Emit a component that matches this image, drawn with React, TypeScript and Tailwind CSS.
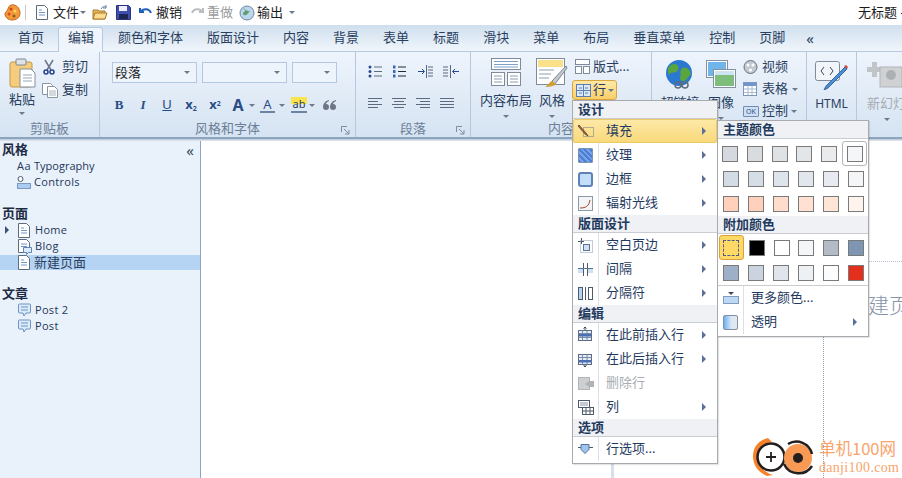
import type { ReactNode } from 'react';

const tabs = ['首页', '编辑', '颜色和字体', '版面设计', '内容', '背景', '表单', '标题', '滑块', '菜单', '布局', '垂直菜单', '控制', '页脚'];

const themeColors = [
  ['#d5d8de', '#d8dcdf', '#dfe2e4', '#e3e6e8', '#e9ebed', '#f5f6f8'],
  ['#d3dbe4', '#d5dee6', '#dde4ec', '#e2e7ee', '#e7ebf1', '#f5f6f8'],
  ['#ffd0bb', '#ffd0bb', '#ffdccb', '#ffe0d3', '#ffe4d8', '#fff4ed'],
];
const extraColors = [
  ['#ffd966', '#000000', '#ffffff', '#f5f6f8', '#b3bbc6', '#7f96b2'],
  ['#9db0c8', '#cbd3df', '#e0e4eb', '#eef1f4', '#fbfcfd', '#e3301c'],
];

const Caret = ({ className = '' }: { className?: string }) => (
  <span className={`inline-block w-0 h-0 border-x-[3px] border-x-transparent border-t-[3px] border-t-[#6d7a8c] ${className}`} />
);

const Arrow = () => <span className="ml-auto w-0 h-0 border-y-[4px] border-y-transparent border-l-[4px] border-l-[#5a6f9c]" />;

const Icon = ({ w = 16, h = 16, box, children }: { w?: number; h?: number; box?: string; children: ReactNode }) => (
  <svg width={w} height={h} viewBox={box ?? `0 0 ${w} ${h}`} className="shrink-0">{children}</svg>
);

const DocIcon = ({ w = 12, h = 15 }: { w?: number; h?: number }) => (
  <Icon w={w} h={h} box="0 0 12 15">
    <path d="M.5.5h8l3 3v11H.5z" fill="#fff" stroke="#5f6c7c" />
    <path d="M3 5h3M3 7.5h6M3 10h6" stroke="#6f97c8" />
  </Icon>
);

const BlogIcon = () => (
  <Icon w={14} h={16}>
    <path d="M.5.5h8l3 3v10H.5z" fill="#fff" stroke="#5f6c7c" />
    <path d="M3 5h6M3 7.5h6" stroke="#6f97c8" />
    <path d="M5.500 8.500h8v5h-3l-2 2v-2h-3z" fill="#dcebfa" stroke="#5f86b8" />
  </Icon>
);

const Bubble = () => (
  <Icon w={13} h={14}>
    <path d="M1.5 1h10a1 1 0 0 1 1 1v7a1 1 0 0 1-1 1H8l-2 3-1-3H1.5a1 1 0 0 1-1-1V2a1 1 0 0 1 1-1z" fill="#dcebfa" stroke="#6c93c3" />
    <path d="M3 4h7M3 7h7" stroke="#6c93c3" />
  </Icon>
);

const Lines = ({ kind }: { kind: 'l' | 'c' | 'r' | 'j' }) => {
  const short = kind === 'j' ? [0, 14] : kind === 'l' ? [0, 10] : kind === 'c' ? [2, 12] : [4, 14];
  return (
    <Icon w={14} h={12}>
      {[1, 4, 7, 10].map((y, i) => (
        <path key={y} d={i % 2 ? `M${short[0]} ${y + 0.5}H${short[1]}` : `M0 ${y + 0.5}H14`} stroke="#5a6b80" />
      ))}
    </Icon>
  );
};

const Ball = () => (
  <Icon w={16} h={16}>
    <circle cx="8" cy="8" r="7" fill="#bcd6ee" stroke="#6b8aa8" />
    <path d="M4 4c3-1 3 2 1 3s-1 4 2 3 2-4 5-3" fill="#5f9e6b" />
  </Icon>
);

const Group = ({ w, label, launcher, children }: { w: number; label?: string; launcher?: boolean; children: ReactNode }) => (
  <div style={{ width: w }} className="relative shrink-0 h-full flex flex-col border-r border-[#b6c8de]">
    <div className="flex-1 min-h-0">{children}</div>
    <div className="h-[16px] flex items-center justify-center text-[13px] text-[#6c7f97]">{label}</div>
    {launcher && (
      <svg width="9" height="9" className="absolute right-[5px] bottom-[2px]">
        <path d="M.5 6V.5H6M3 3l5 5M8 4v4H4" fill="none" stroke="#7d8da1" />
      </svg>
    )}
  </div>
);

const Combo = ({ w, text }: { w: number; text?: string }) => (
  <div style={{ width: w }} className="h-[21px] bg-[#eef4fb] border border-[#b4c7e1] flex items-center px-[2px] text-[13px] text-[#1b1b1b]">
    {text}
    <Caret className="ml-auto mr-[4px] border-t-[#5c6470]" />
  </div>
);

const Fmt = ({ w, className = '', children }: { w: number; className?: string; children: ReactNode }) => (
  <span style={{ width: w }} className={`shrink-0 text-center text-[13px] text-[#2a4d87] ${className}`}>{children}</span>
);

const Swatch = ({ color, ring, sel }: { color: string; ring?: boolean; sel?: boolean }) => (
  <div className={`w-[25px] h-[25px] flex items-center justify-center ${ring ? 'rounded-[3px] border border-[#b1b4b8] h-[23px] w-[23px] mx-[1px]' : ''} ${sel ? 'rounded-[3px] border border-[#d8a13a] bg-[#ffd966] w-[23px] h-[23px] mx-[1px]' : ''}`}>
    <div
      style={{ backgroundColor: color }}
      className={`w-[16px] h-[16px] ${sel ? 'border border-dashed border-[#4b5f86]' : 'border border-[#7a7a7a]'}`}
    />
  </div>
);

const MenuHead = ({ children }: { children: ReactNode }) => (
  <div className="h-[18px] bg-[#eff1f5] border-b border-[#c9ccd1] pl-[5px] text-[13px] leading-[17px] font-bold text-[#1f3a5f]">{children}</div>
);

const MenuRow = ({ icon, text, arrow, active, disabled }: { icon: ReactNode; text: string; arrow?: boolean; active?: boolean; disabled?: boolean }) => (
  <div className={`relative h-[24px] flex items-center pr-[11px] text-[13px] ${disabled ? 'text-[#a9adb3]' : 'text-[#1f3a5f]'} ${active ? 'bg-gradient-to-b from-[#fde9a8] to-[#f9d879] outline outline-1 -outline-offset-1 outline-[#eecb62] rounded-[2px]' : ''}`}>
    <span className="w-[25px] h-full flex items-center justify-center shrink-0">{icon}</span>
    <span className="ml-[8px]">{text}</span>
    {arrow && <Arrow />}
    {!active && <span className="absolute left-[25px] top-0 bottom-0 w-px bg-[#dcdfe3]" />}
  </div>
);

const TableIcon = ({ fill = '#4a6fb5', mark }: { fill?: string; mark?: 'up' | 'down' }) => (
  <Icon w={15} h={16}>
    <rect x=".5" y="3.5" width="13" height="10" fill="#e7edf7" stroke="#5a6b88" />
    <path d="M.5 6.5h13M.5 10.5h13M4.5 3.5v10M9 3.5v10" stroke="#7a8aa6" />
    <rect x="1" y={mark === 'down' ? 9 : 7} width="12" height="2.5" fill={fill} />
    {mark === 'up' && <path d="M7 0v3M5.5 1.5L7 0l1.5 1.5" stroke="#3b4a60" fill="none" />}
    {mark === 'down' && <path d="M7 13.5V16M5.5 14.5L7 16l1.5-1.5" stroke="#3b4a60" fill="none" />}
  </Icon>
);

function App() {
  return (
    <div className="relative w-[902px] h-[478px] overflow-hidden bg-white font-['Noto_Sans','Noto_Sans_CJK_SC',sans-serif] flex flex-col">
      {/* quick access bar */}
      <div className="h-[25px] shrink-0 flex items-center text-[13px] text-[#1b1b1b]">
        <svg width="17" height="17" viewBox="0 0 17 17" className="ml-[4px]">
          <path d="M7 1c5-1 9 3 9 8s-4 7-8 7-7-3-7-6c0-2 1-2 2-3s1-5 4-6z" fill="#f19a3a" stroke="#c9671e" />
          <circle cx="7" cy="5" r="1.5" fill="#d83a22" />
          <circle cx="11" cy="7" r="1.5" fill="#ffd75a" />
          <circle cx="5" cy="10" r="1.5" fill="#e0452c" />
          <circle cx="10" cy="12" r="1.5" fill="#8f5a22" />
        </svg>
        <span className="ml-[4px] w-px h-[15px] bg-[#c7c7c7]" />
        <span className="ml-[10px]"><DocIcon /></span>
        <span className="ml-[5px]">文件</span>
        <Caret className="ml-[1px]" />
        <svg width="16" height="15" className="ml-[6px]">
          <path d="M1 5h5l1 1h6v8H1z" fill="#e9b75c" stroke="#a97a2c" />
          <path d="M1 14l2-6h12l-2 6z" fill="#fbdc91" stroke="#a97a2c" />
          <path d="M9 4c1-2 3-3 5-2M14 0v3h-3" fill="none" stroke="#5f7fa3" />
        </svg>
        <svg width="15" height="15" className="ml-[8px]">
          <path d="M.5.5h12l2 2v12H.5z" fill="#3f4fb0" stroke="#2a347a" />
          <rect x="3" y="1" width="8" height="5" fill="#eef" />
          <rect x="3" y="9" width="9" height="5" fill="#1e2554" />
        </svg>
        <svg width="13" height="11" className="ml-[8px]">
          <path d="M1 1v4h4M1.5 5C4 1.500 10 1 12 6" fill="none" stroke="#1d5fb5" strokeWidth="2" />
        </svg>
        <span className="ml-[4px]">撤销</span>
        <svg width="13" height="11" className="ml-[9px]">
          <path d="M12 1v4H8M11.500 5C9 1.500 3 1 1 6" fill="none" stroke="#b9bcc0" strokeWidth="2" />
        </svg>
        <span className="ml-[3px] text-[#9a9c9e]">重做</span>
        <span className="ml-[6px]"><Ball /></span>
        <span className="ml-[2px]">输出</span>
        <Caret className="ml-[6px]" />
        <span className="ml-auto w-[44px] whitespace-nowrap overflow-hidden">无标题 -</span>
      </div>

      {/* tabs */}
      <div className="h-[27px] shrink-0 bg-gradient-to-b from-[#cfdfee] to-[#f0f5fb] flex items-end pl-[18px] gap-[24px] border-b border-[#b7c9e2] text-[13px] text-[#2a3f5f]">
        {tabs.map((t) => (
          <div key={t} className={`relative h-[26px] flex items-center whitespace-nowrap ${t === '编辑' ? 'z-10' : ''}`}>
            {t === '编辑' && <span className="absolute -left-[10px] -right-[9px] top-[2px] -bottom-px bg-[#f0f5fc] border border-b-0 border-[#b7c9e2] rounded-t-[3px]" />}
            <span className="relative">{t}</span>
          </div>
        ))}
        <span className="h-[26px] flex items-center text-[15px] text-[#2a3f5f] -ml-[3px]">«</span>
      </div>

      {/* ribbon */}
      <div className="h-[87px] shrink-0 bg-gradient-to-b from-[#eef4fc] to-[#d5e3f2] border-b-2 border-[#8ea5c0] flex">
        <Group w={100} label="剪贴板">
          <div className="flex pl-[6px] pt-[6px]">
            <div className="w-[32px] flex flex-col items-center">
              <svg width="27" height="30">
                <rect x="1" y="4" width="22" height="25" rx="2" fill="#f6cc7d" stroke="#c4974d" />
                <rect x="7" y="1" width="10" height="6" rx="1" fill="#dfe3e8" stroke="#7d8794" />
                <path d="M11 11h11l4 4v14H11z" fill="#fff" stroke="#8390a0" />
                <path d="M14 17h9M14 20h9M14 23h9" stroke="#9ba7b6" />
              </svg>
              <span className="text-[13px] text-[#2a3f5f] mt-[2px]">粘贴</span>
              <Caret className="mt-[2px]" />
            </div>
            <div className="ml-[5px] flex flex-col gap-[4px] text-[13px] text-[#2a3f5f]">
              <div className="flex items-center gap-[6px] h-[18px]">
                <svg width="12" height="16">
                  <path d="M2 1l6 10M10 1L4 11" stroke="#6b7686" strokeWidth="1.500" />
                  <circle cx="3" cy="13" r="2" fill="none" stroke="#24408e" strokeWidth="1.500" />
                  <circle cx="9" cy="13" r="2" fill="none" stroke="#24408e" strokeWidth="1.500" />
                </svg>
                <span className="ml-[1px]">剪切</span>
              </div>
              <div className="flex items-center gap-[4px] h-[18px] -ml-[1px] mt-[1px]">
                <svg width="16" height="15">
                  <path d="M.5.5h8l2 2v9H.5z" fill="#fff" stroke="#8a95a3" />
                  <path d="M5.500 3.500h7l3 3v8h-10z" fill="#fff" stroke="#8a95a3" />
                  <path d="M7 8h7M7 10h7M7 12h7" stroke="#a8b2bf" />
                </svg>
                <span>复制</span>
              </div>
            </div>
          </div>
        </Group>

        <Group w={256} label="风格和字体" launcher>
          <div className="pl-[12px] pt-[10px]">
            <div className="flex gap-[5px]">
              <Combo w={85} text="段落" />
              <Combo w={85} />
              <Combo w={45} />
            </div>
            <div className="flex items-center mt-[10px] -ml-[5px]">
              <Fmt w={24} className="font-bold font-['Liberation_Serif',serif]">B</Fmt>
              <Fmt w={24} className="italic font-bold font-['Liberation_Serif',serif]">I</Fmt>
              <Fmt w={24} className="underline font-['Liberation_Sans',sans-serif]">U</Fmt>
              <Fmt w={24} className="font-bold">x<sub className="text-[7px]">2</sub></Fmt>
              <Fmt w={24} className="font-bold">x<sup className="text-[7px]">2</sup></Fmt>
              <Fmt w={22} className="font-bold text-[16px]">A</Fmt>
              <Caret className="mr-[5px]" />
              <span className="w-[15px] text-center text-[13px] text-[#2a4d87] border-b-2 border-[#6d83a3] leading-[14px]">A</span>
              <Caret className="ml-[4px] mr-[6px]" />
              <span className="w-[16px] text-[11px] leading-[14px] text-[#2a3f5f] border-b-2 border-[#6d83a3] bg-[linear-gradient(#f9e44c_50%,transparent_50%)] text-center">ab</span>
              <Caret className="ml-[2px] mr-[8px]" />
              <svg width="14" height="11" className="shrink-0">
                <path d="M6 0C2 1 0 4 0 7a3 3 0 1 0 3-3c0-1 1-2 3-3zM13 0C9 1 7 4 7 7a3 3 0 1 0 3-3c0-1 1-2 3-3z" fill="#6c7684" />
              </svg>
            </div>
          </div>
        </Group>

        <Group w={115} label="段落" launcher>
          <div className="pl-[12px] pt-[13px] flex flex-col gap-[19px]">
            <div className="flex items-center gap-[10px]">
              <Icon w={14} h={13}>
                {[2, 6.500, 11].map((y) => (
                  <g key={y}><circle cx="2" cy={y} r="1.500" fill="#27478f" /><path d={`M6 ${y}h8`} stroke="#5a6b80" /></g>
                ))}
              </Icon>
              <Icon w={14} h={13}>
                {[2, 6.500, 11].map((y) => (
                  <g key={y}><rect x="1" y={y - 1.500} width="2.500" height="3" fill="#3c66b4" /><path d={`M6 ${y}h8`} stroke="#1f2a3a" /></g>
                ))}
              </Icon>
              <span className="ml-[2px]">
                <Icon w={15} h={13}>
                  <path d="M0 6.500h6M4 4l2.500 2.500L4 9" stroke="#27478f" fill="none" />
                  <path d="M8.500 0v13M10 2h5M10 5h5M10 8h5M10 11h5" stroke="#5a6b80" />
                </Icon>
              </span>
              <Icon w={16} h={13}>
                <path d="M0 2h5M0 5h5M0 8h5M0 11h5M7.500 0v13" stroke="#5a6b80" />
                <path d="M10 6.500h6M12 4L9.500 6.500 12 9" stroke="#27478f" fill="none" />
              </Icon>
            </div>
            <div className="flex items-center gap-[10px]">
              <Lines kind="l" />
              <Lines kind="c" />
              <Lines kind="r" />
              <Lines kind="j" />
            </div>
          </div>
        </Group>

        <Group w={181} label="内容">
          <div className="flex pl-[9px] pt-[6px] text-[13px] text-[#2a3f5f]">
            <div className="w-[52px] flex flex-col items-center">
              <svg width="30" height="28">
                <rect x=".5" y=".5" width="29" height="11" fill="#fff" stroke="#7f8b9a" />
                <path d="M3 3.500h24M3 6.500h24M3 9h24" stroke="#7e9fc8" />
                <rect x=".5" y="14.500" width="13" height="13" fill="#fff" stroke="#7f8b9a" />
                <rect x="16.500" y="14.500" width="13" height="13" fill="#fff" stroke="#7f8b9a" />
                <path d="M3 18h8M3 21h8M3 24h8M19 18h8M19 21h8M19 24h8" stroke="#8c9cb0" />
              </svg>
              <span className="mt-[5px] whitespace-nowrap">内容布局</span>
              <Caret className="mt-[4px]" />
            </div>
            <div className="ml-[2px] w-[36px] flex flex-col items-center">
              <svg width="32" height="30" className="-mb-[2px]">
                <rect x=".5" y=".5" width="28" height="26" fill="#fff" stroke="#7f8b9a" />
                <rect x="2" y="2" width="25" height="7" fill="#fbe08a" />
                <path d="M3 12h15M3 16h12M3 20h10" stroke="#8c9cb0" />
                <path d="M30 8L16 23l3 3L31 10z" fill="#c4c9cf" stroke="#7d8794" />
                <path d="M16 23c-3 1-3 4-7 6 5 0 10-1 11-3z" fill="#d2a033" />
              </svg>
              <span className="mt-[5px]">风格</span>
              <Caret className="mt-[4px]" />
            </div>
            <div className="ml-[5px] flex flex-col">
              <div className="flex items-center gap-[3px] h-[17px]">
                <svg width="15" height="15">
                  <rect x=".5" y=".5" width="14" height="5" fill="#fff" stroke="#7f8b9a" />
                  <rect x=".5" y="7.500" width="6" height="7" fill="#fff" stroke="#7f8b9a" />
                  <rect x="8.500" y="7.500" width="6" height="7" fill="#fff" stroke="#7f8b9a" />
                </svg>
                <span className="whitespace-nowrap">版式...</span>
              </div>
            </div>
          </div>
          <div className="absolute left-[101px] top-[28px] w-[45px] h-[20px] rounded-[3px] border border-[#d9a63e] bg-gradient-to-b from-[#fde9a8] to-[#f8cf67] flex items-center pl-[3px] gap-[2px] text-[13px] text-[#1f3a5f]">
            <svg width="15" height="13">
              <rect x=".5" y=".5" width="14" height="12" fill="#dbe8f7" stroke="#5d7fae" />
              <path d="M7.500 1v11M1 6.500h13M3 4h3M9 4h3M3 9h3M9 9h3" stroke="#5d7fae" />
            </svg>
            <span>行</span>
            <Caret />
          </div>
        </Group>

        <Group w={155}>
          <div className="flex pl-[13px] pt-[8px] text-[13px] text-[#2a3f5f]">
            <div className="w-[30px] flex flex-col items-center">
              <svg width="30" height="31">
                <circle cx="14" cy="13" r="13" fill="#2a78cf" />
                <path d="M6 5c5-3 9 1 7 5s-7 1-9 5c-2-4-1-8 2-10zM17 8c5-2 8 2 9 6-3 3-5 8-9 7s0-8-2-9z" fill="#5aa53e" />
                <path d="M10 25a3 3 0 0 1 6 0 3 3 0 0 1-6 0zM17 25a3 3 0 0 1 6 0 3 3 0 0 1-6 0z" fill="none" stroke="#5f6c7c" strokeWidth="1.500" />
              </svg>
              <span className="mt-[2px] whitespace-nowrap">超链接</span>
            </div>
            <div className="ml-[11px] w-[30px] flex flex-col items-center">
              <svg width="30" height="28">
                <rect x=".5" y=".5" width="21" height="17" fill="#fff" stroke="#8390a0" />
                <rect x="2" y="2" width="18" height="14" fill="#6fb5ea" />
                <rect x="7.500" y="9.500" width="22" height="18" fill="#fff" stroke="#8390a0" />
                <rect x="9" y="11" width="19" height="15" fill="#7fbd7a" />
                <path d="M9 15h19V11H9z" fill="#cfe4f2" />
              </svg>
              <span className="mt-[5px]">图像</span>
              <Caret className="mt-[4px]" />
            </div>
            <div className="ml-[7px] -mt-[2px] flex flex-col gap-[4px]">
              <div className="flex items-center gap-[4px] h-[18px]">
                <svg width="15" height="15">
                  <circle cx="7.500" cy="7" r="6.500" fill="#c2c9d2" stroke="#69737f" />
                  <circle cx="5" cy="5" r="1.500" fill="#fff" />
                  <circle cx="10" cy="5" r="1.500" fill="#fff" />
                  <circle cx="7.500" cy="10" r="1.500" fill="#fff" />
                </svg>
                <span>视频</span>
              </div>
              <div className="flex items-center gap-[4px] h-[18px]">
                <svg width="15" height="14">
                  <rect x=".5" y=".5" width="13" height="13" fill="#fff" stroke="#7f97b8" />
                  <rect x="1" y="1" width="12" height="3" fill="#6f95cc" />
                  <path d="M1 7h12M1 10.500h12M5 4v9M9 4v9" stroke="#a9bbd3" />
                </svg>
                <span>表格</span>
                <Caret />
              </div>
              <div className="flex items-center gap-[3px] h-[18px]">
                <span className="w-[16px] h-[11px] rounded-[1px] bg-[#cfe0f3] border border-[#6f8db5] text-[7px] leading-[9px] text-center text-[#2a4d87]">OK</span>
                <span>控制</span>
                <Caret />
              </div>
            </div>
          </div>
        </Group>

        <Group w={50}>
          <div className="flex flex-col items-center pt-[9px] text-[12px] text-[#2a3f5f]">
            <svg width="33" height="29">
              <rect x=".5" y=".5" width="24" height="19" rx="2" fill="#f2f5f9" stroke="#7f8b9a" />
              <path d="M9 6l-3 4 3 4M15 6l3 4-3 4" fill="none" stroke="#3b4a60" />
              <path d="M30 6L11 25l-2 4 4-2L32 8z" fill="#4f8fd8" stroke="#33659f" />
              <path d="M29 5l3 3 1-2-2-2z" fill="#d9483a" />
            </svg>
            <span className="mt-[5px]">HTML</span>
          </div>
        </Group>

        <div className="flex-1 min-w-0 overflow-hidden">
          <div className="flex flex-col items-start pl-[10px] pt-[8px] text-[13px] text-[#a6abb2] whitespace-nowrap">
            <svg width="35" height="30" className="-mb-[1px]">
              <path d="M5 2h5v5h5v5h-5v5H5v-5H0V7h5z" fill="#c2c5c8" />
              <rect x="13" y="7" width="22" height="20" fill="#cfd1d3" stroke="#b2b5b8" />
              <circle cx="24" cy="15" r="5" fill="#adb0b3" />
            </svg>
            <span className="mt-[5px]">新幻灯片</span>
            <Caret className="mt-[4px] ml-[17px]" />
          </div>
        </div>
      </div>
      <div className="h-[2px] shrink-0 bg-gradient-to-b from-[#b9c7d8] to-[#e4e9f0]" />

      {/* body */}
      <div className="flex-1 min-h-0 flex">
        <div className="relative w-[201px] shrink-0 bg-[#e9f1fb] border-r border-[#8ba4c6] text-[12px] text-[#22385a]">
          <span className="absolute right-[6px] top-0 text-[15px] leading-[18px] text-[#3b4a60]">«</span>
          <div className="h-[17px] pl-[2px] text-[13px] leading-[17px] font-bold text-[#1d2c44]">风格</div>
          <div className="h-[16px] flex items-center pl-[17px] gap-[1px] font-['Open_Sans',sans-serif] text-[11px]">
            <span className="w-[16px] tracking-[0.5px]">Aa</span>
            <span>Typography</span>
          </div>
          <div className="h-[16px] flex items-center pl-[17px] gap-[2px] font-['Open_Sans',sans-serif] text-[11px] tracking-[0.3px]">
            <svg width="15" height="13">
              <circle cx="3.500" cy="3" r="2.500" fill="#fff" stroke="#4d5a6c" />
              <rect x=".5" y="7.500" width="13" height="5" fill="#a9cdf0" stroke="#7d99bb" />
            </svg>
            <span>Controls</span>
          </div>
          <div className="h-[17px] mt-[15px] pl-[2px] text-[13px] leading-[17px] font-bold text-[#1d2c44]">页面</div>
          <div className="relative h-[16px] flex items-center pl-[18px] gap-[5px] font-['Open_Sans',sans-serif] text-[11px] tracking-[0.3px]">
            <span className="absolute left-[5px] w-0 h-0 border-y-[4px] border-y-transparent border-l-[4px] border-l-[#3b5272]" />
            <DocIcon />
            <span>Home</span>
          </div>
          <div className="h-[17px] flex items-center pl-[18px] gap-[3px] font-['Open_Sans',sans-serif] text-[11px] tracking-[0.3px]">
            <BlogIcon />
            <span>Blog</span>
          </div>
          <div className="h-[15px] flex items-center pl-[18px] gap-[4px] bg-[#b5d3f3] text-[13px] text-[#2a3f5f]">
            <DocIcon />
            <span>新建页面</span>
          </div>
          <div className="h-[17px] mt-[15px] pl-[2px] text-[13px] leading-[17px] font-bold text-[#1d2c44]">文章</div>
          <div className="h-[16px] flex items-center pl-[18px] gap-[4px] font-['Open_Sans',sans-serif] text-[11px] tracking-[0.3px]">
            <Bubble />
            <span>Post 2</span>
          </div>
          <div className="h-[16px] flex items-center pl-[18px] gap-[4px] font-['Open_Sans',sans-serif] text-[11px] tracking-[0.3px]">
            <Bubble />
            <span>Post</span>
          </div>
        </div>
        <div className="flex-1 bg-white" />
      </div>

      {/* page canvas behind the menus */}
      <div className="absolute left-[611px] top-[460px] w-[3px] h-[18px] bg-[#d4e0ec]" />
      <div className="absolute left-[823px] top-[262px] bottom-0 border-l border-dotted border-[#8d9db4]" />
      <div className="absolute left-[823px] right-0 top-[261px] border-t border-dotted border-[#b5c1d2]" />
      <div className="absolute left-[868px] top-[291px] text-[21px] leading-[28px] text-[#8493a8] whitespace-nowrap font-light">建页</div>

      {/* watermark */}
      <svg width="64" height="42" viewBox="0 0 64 42" className="absolute left-[752px] top-[436px]">
        <path d="M16 2C7 4 1 11 1 20s5 16 14 20l6-1c-8-2-15-9-15-18S12 8 20 6z" fill="#f7822b" />
        <circle cx="19" cy="21" r="13.500" fill="#fff" stroke="#231f1f" strokeWidth="2.500" />
        <path d="M14 21h10M19 16v10" stroke="#231f1f" strokeWidth="1.800" />
        <circle cx="46" cy="22" r="14" fill="#f89a54" />
        <path d="M36 8a16 16 0 0 1 24 10M32 28a16 16 0 0 0 28 2" fill="none" stroke="#231f1f" strokeWidth="2.500" />
        <circle cx="46" cy="22" r="5" fill="#231f1f" />
      </svg>
      <div className="absolute left-[819px] top-[438px] text-[16.5px] leading-[21px] text-[#f9a46c] whitespace-nowrap font-['Noto_Sans_CJK_SC',sans-serif]">单机100网</div>
      <div className="absolute left-[819px] top-[460px] text-[14px] leading-[15px] text-[#f9a46c] whitespace-nowrap tracking-[0.3px] font-['Liberation_Serif',serif]">danji100.com</div>

      {/* row dropdown */}
      <div className="absolute left-[572px] top-[100px] w-[146px] h-[364px] bg-white border border-[#a7abb0] shadow-[1px_1px_1px_rgba(0,0,0,0.1)]">
        <MenuHead>设计</MenuHead>
        <MenuRow
          active
          arrow
          text="填充"
          icon={
            <svg width="16" height="14">
              <rect x="5.500" y="3.500" width="10" height="9" fill="none" stroke="#6b7686" strokeDasharray="1 1" />
              <path d="M1 1l7 8 2 3-3-2-7-8z" fill="#d8643a" stroke="#2e2e2e" strokeWidth=".7" />
            </svg>
          }
        />
        <MenuRow
          arrow
          text="纹理"
          icon={<span className="w-[15px] h-[15px] bg-[repeating-linear-gradient(45deg,#4d7fd8_0_2px,#7aa3e6_2px_4px)] border border-[#7b93b3] rounded-[1px]" />}
        />
        <MenuRow
          arrow
          text="边框"
          icon={<span className="w-[15px] h-[15px] rounded-[3px] bg-[#c3def8] border-2 border-[#5c82b8]" />}
        />
        <MenuRow
          arrow
          text="辐射光线"
          icon={
            <svg width="15" height="15">
              <rect x=".5" y=".5" width="14" height="14" fill="#f3f4f6" stroke="#8e99a8" />
              <path d="M2 12c6 0 9-2 10-8" fill="none" stroke="#a8452c" />
            </svg>
          }
        />
        <MenuHead>版面设计</MenuHead>
        <MenuRow
          arrow
          text="空白页边"
          icon={
            <svg width="15" height="15">
              <path d="M3.500 0v6M0 3.500h6" stroke="#4d5a6c" />
              <rect x="5.500" y="6.500" width="6" height="6" fill="#cfe0f3" stroke="#5a7398" />
              <rect x="2.500" y="2.500" width="12" height="12" fill="none" stroke="#8b97a8" strokeDasharray="1 1" />
            </svg>
          }
        />
        <MenuRow
          arrow
          text="间隔"
          icon={
            <svg width="15" height="15">
              <path d="M5.500 1v13M9.500 1v13" stroke="#4d5a6c" />
              <rect x="0" y="6" width="5" height="5" fill="#cfe0f3" />
              <rect x="10" y="6" width="5" height="5" fill="#cfe0f3" />
              <path d="M0 6.500h15" stroke="#5a7398" />
            </svg>
          }
        />
        <MenuRow
          arrow
          text="分隔符"
          icon={
            <svg width="15" height="13">
              <rect x=".5" y=".5" width="4" height="12" fill="#b7d3f2" stroke="#4d5a6c" />
              <path d="M7.500 0v13" stroke="#4d5a6c" />
              <rect x="10.500" y=".5" width="4" height="12" fill="#fff" stroke="#4d5a6c" />
            </svg>
          }
        />
        <MenuHead>编辑</MenuHead>
        <MenuRow arrow text="在此前插入行" icon={<TableIcon mark="up" />} />
        <MenuRow arrow text="在此后插入行" icon={<TableIcon mark="down" />} />
        <MenuRow
          disabled
          text="删除行"
          icon={
            <svg width="16" height="13">
              <rect x=".5" y=".5" width="11" height="12" fill="#cdd0d3" stroke="#b2b5b8" />
              <path d="M7 7l4-3h5v6h-5z" fill="#b0b3b6" />
            </svg>
          }
        />
        <MenuRow
          arrow
          text="列"
          icon={
            <svg width="16" height="15">
              <rect x=".5" y=".5" width="11" height="7" fill="#fff" stroke="#4d5a6c" />
              <path d="M2 3h8M2 5h8" stroke="#8b97a8" />
              <rect x="4.500" y="7.500" width="11" height="7" fill="#fff" stroke="#4d5a6c" />
              <path d="M8 8v6M12 8v6M5 11h10" stroke="#4d5a6c" />
            </svg>
          }
        />
        <MenuHead>选项</MenuHead>
        <MenuRow
          text="行选项..."
          icon={
            <svg width="15" height="10">
              <path d="M0 3.500h3M11 3.500h4" stroke="#4d5a6c" />
              <path d="M3 .5h8v5l-4 4-4-4z" fill="#9cc4ef" stroke="#5a7398" />
            </svg>
          }
        />
      </div>

      {/* fill colour flyout */}
      <div className="absolute left-[717px] top-[120px] w-[152px] h-[217px] bg-white border border-[#a7abb0] shadow-[1px_1px_1px_rgba(0,0,0,0.1)]">
        <MenuHead>主题颜色</MenuHead>
        <div className="pt-[2px]">
          {themeColors.map((row, r) => (
            <div key={r} className="flex items-center h-[25px]">
              {row.map((c, i) => (
                <Swatch key={i} color={c} ring={r === 0 && i === 5} />
              ))}
            </div>
          ))}
        </div>
        <MenuHead>附加颜色</MenuHead>
        <div className="pt-[1px] border-b border-[#c9ccd1]">
          {extraColors.map((row, r) => (
            <div key={r} className="flex items-center h-[25px]">
              {row.map((c, i) => (
                <Swatch key={i} color={c} sel={r === 0 && i === 0} />
              ))}
            </div>
          ))}
        </div>
        <div className="text-[13px] text-[#1f3a5f]">
          <div className="relative h-[24px] flex items-center">
            <span className="w-[25px] flex justify-center">
              <svg width="16" height="12">
                <path d="M5 0h6L8 3z" fill="#3c4a5e" />
                <rect x=".5" y="4.500" width="15" height="7" fill="#bcd8f3" stroke="#7f9cc0" />
              </svg>
            </span>
            <span className="ml-[8px]">更多颜色...</span>
            <span className="absolute left-[25px] top-0 bottom-0 w-px bg-[#dcdfe3]" />
          </div>
          <div className="relative h-[24px] flex items-center pr-[11px]">
            <span className="w-[25px] flex justify-center">
              <span className="w-[15px] h-[15px] rounded-[2px] border border-[#7f8fa6] bg-[linear-gradient(90deg,#6eb0ef,#d7e8f8_55%,#e8e8e8)]" />
            </span>
            <span className="ml-[8px]">透明</span>
            <Arrow />
            <span className="absolute left-[25px] top-0 bottom-0 w-px bg-[#dcdfe3]" />
          </div>
        </div>
      </div>
    </div>
  );
}

export default App;
